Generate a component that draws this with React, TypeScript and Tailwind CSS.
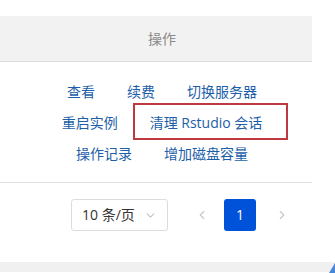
import React from 'react';
import { ChevronDown, ChevronLeft, ChevronRight } from 'lucide-react';

const ROWS: string[][] = [
  ['查看', '续费', '切换服务器'],
  ['重启实例', '清理 Rstudio 会话'],
  ['操作记录', '增加磁盘容量'],
];

export default function App() {
  return (
    <div
      className="relative w-[335px] h-[273px] overflow-hidden bg-white flex flex-col"
      style={{ fontFamily: '"Open Sans", "Noto Sans CJK SC", sans-serif' }}
    >
      <div className="h-4" />

      {/* table header */}
      <div className="w-[312px] h-[46px] pl-3 flex items-center justify-center bg-[#f2f2f2] border-b border-[#dedede] text-sm text-[#8a8a8a]">
        操作
      </div>

      {/* action cell */}
      <div className="w-[312px] pl-3 pt-[14px] pb-[13px] border-b border-[#e3e3e3] flex flex-col">
        {ROWS.map((row, i) => (
          <div key={i} className="h-[31px] flex items-center justify-center gap-8 text-sm text-[#1d5ea8]">
            {row.map((label) => (
              <span key={label} className="cursor-pointer whitespace-nowrap">
                {label}
              </span>
            ))}
          </div>
        ))}
      </div>

      {/* pagination */}
      <div className="mt-4 flex items-center">
        <div className="ml-[71px] w-[97px] h-8 pl-[10px] pr-[10px] flex items-center justify-between border border-[#dcdcdc] rounded-[3px] text-sm text-[#333]">
          <span>10 条/页</span>
          <ChevronDown size={13} className="text-[#c4c4c4]" />
        </div>
        <button type="button" className="ml-[18px] w-8 h-8 flex items-center justify-center text-[#c8c8c8]">
          <ChevronLeft size={14} />
        </button>
        <button
          type="button"
          className="ml-[6px] w-8 h-8 flex items-center justify-center rounded-[3px] bg-[#0052d9] text-white text-sm"
        >
          1
        </button>
        <button type="button" className="ml-[10px] w-8 h-8 flex items-center justify-center text-[#c8c8c8]">
          <ChevronRight size={14} />
        </button>
      </div>

      <div className="mt-[31px] h-[10px] w-full bg-[#f0f0f0]" />

      {/* annotation box */}
      <div className="absolute left-[133px] top-[103px] w-[155px] h-[37px] border-2 border-[#be3a40] pointer-events-none" />

      <svg className="absolute right-0 bottom-0" width="8" height="10" viewBox="0 0 8 10">
        <polygon points="8,0 8,10 2,10" fill="#4a86d8" />
      </svg>
    </div>
  );
}
